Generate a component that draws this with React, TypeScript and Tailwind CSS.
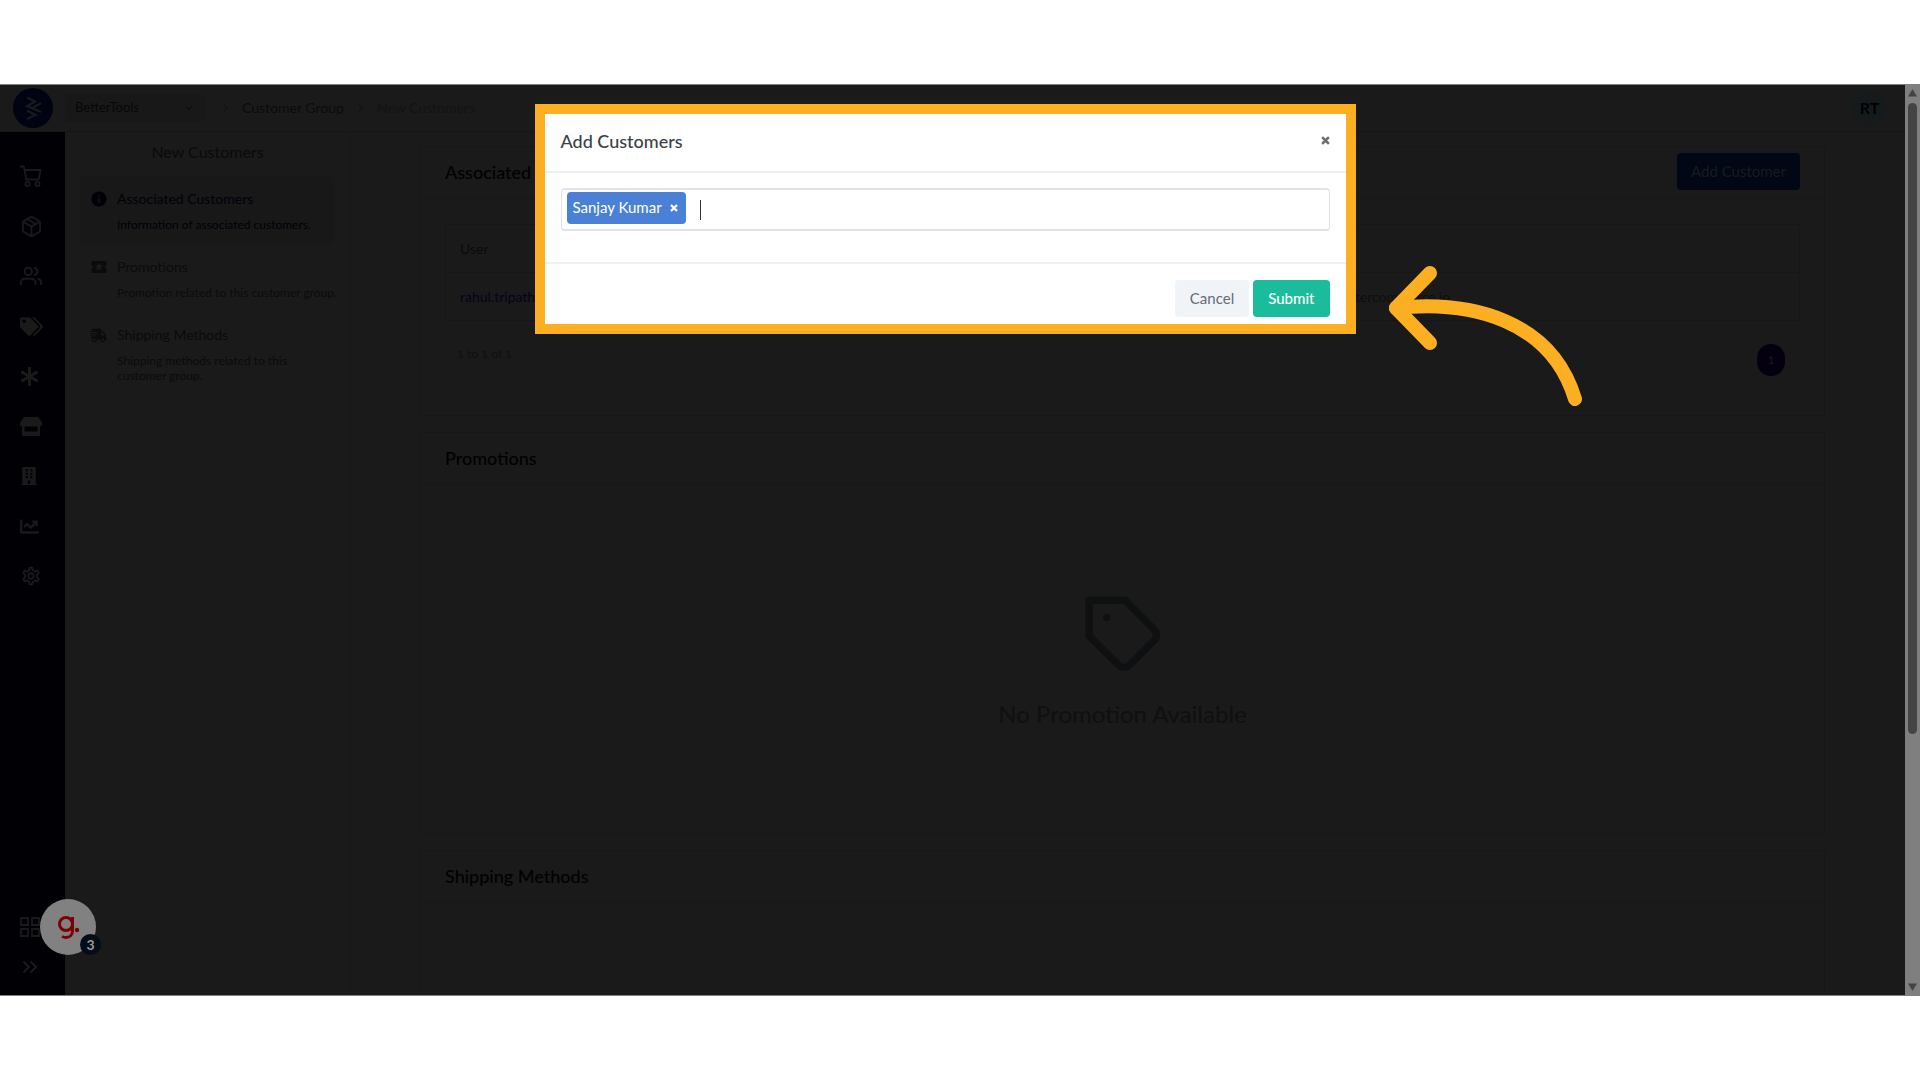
import type { ReactNode } from "react";
import { FaAsterisk, FaBuilding, FaChartLine, FaShippingFast, FaTags } from "react-icons/fa";
import {
  FiChevronDown,
  FiChevronRight,
  FiChevronsRight,
  FiPackage,
  FiUsers,
} from "react-icons/fi";
import { MdInfo, MdLocalActivity, MdOutlineSettings } from "react-icons/md";

function CartIcon() {
  return (
    <svg width="22" height="22" viewBox="0 0 22 22" fill="none" stroke="currentColor" strokeWidth="1.800">
      <path d="M0 1.500h3.800l2.500 13h12.400l1.800-9.500H4.500" strokeLinejoin="round" />
      <circle cx="7.500" cy="19" r="2.100" />
      <circle cx="17.500" cy="19" r="2.100" />
    </svg>
  );
}

function StoreIcon() {
  return (
    <svg width="22" height="19" viewBox="0 0 22 19" fill="currentColor">
      <path d="M4 0h14l4 5.500v1.500a2.500 2.500 0 0 1-2.500 2.500h-17A2.500 2.500 0 0 1 0 7V5.500z" />
      <path d="M2 9h2.500v5.500h13V9H20v9a1 1 0 0 1-1 1H3a1 1 0 0 1-1-1z" />
    </svg>
  );
}

function GridIcon() {
  return (
    <svg width="20" height="20" viewBox="0 0 20 20" fill="none" stroke="currentColor" strokeWidth="1.800">
      <path d="M1 1h7v7H1zM12 1h7v7h-7zM1 12h7v7H1zM12 12h7v7h-7z" />
    </svg>
  );
}

const navItems = [
  { label: "Orders", icon: <CartIcon /> },
  { label: "Catalog", icon: <FiPackage size={23} /> },
  { label: "Customers", icon: <FiUsers size={22} /> },
  { label: "Marketing", icon: <FaTags size={23} /> },
  { label: "Content", icon: <FaAsterisk size={19} /> },
  { label: "Store", icon: <StoreIcon /> },
  { label: "Company", icon: <FaBuilding size={18} /> },
  { label: "Reports", icon: <FaChartLine size={19} /> },
  { label: "Settings", icon: <MdOutlineSettings size={22} /> },
];

const sections = [
  {
    title: "Associated Customers",
    text: "Information of associated customers.",
    icon: <MdInfo size={18} />,
    active: true,
  },
  {
    title: "Promotions",
    text: "Promotion related to this customer group.",
    icon: <MdLocalActivity size={18} />,
    active: false,
  },
  {
    title: "Shipping Methods",
    text: "Shipping methods related to this customer group.",
    icon: <FaShippingFast size={17} />,
    active: false,
  },
];

function Header() {
  return (
    <header className="flex h-[47px] shrink-0 items-center border-b border-[#161616] pl-[13px] pr-[18px]">
      <a href="#" aria-label="Home" className="mr-3">
        <svg width="40" height="40" viewBox="0 0 40 40" fill="none">
          <circle cx="20" cy="20" r="20" fill="#010312" />
          <path
            d="M14 9.500l8 4-8 4.500 14 6M28 15l-8 4.500M14 22.500l8.500 4.500-8.500 4"
            stroke="#1a1a1c"
            strokeWidth="2.200"
          />
        </svg>
      </a>
      <div className="relative w-[140px]">
        <select
          aria-label="Store"
          className="h-7 w-full appearance-none rounded-sm bg-[#181818] px-2.5 text-[13px] text-[#060708]"
        >
          <option>BetterTools</option>
        </select>
        <FiChevronDown
          size={12}
          className="pointer-events-none absolute right-2.5 top-2 text-[#060708]"
        />
      </div>
      <nav className="ml-[14px] flex items-center gap-2.5 text-sm">
        <FiChevronRight size={13} className="text-[#141414]" />
        <a href="#" className="text-[#0a0b0d]">
          Customer Group
        </a>
        <FiChevronRight size={13} className="text-[#141414]" />
        <span className="text-[#121314]">New Customers</span>
      </nav>
      <button className="ml-auto size-[35px] rounded-full bg-[#151a1c] text-base font-bold text-[#020202]">
        RT
      </button>
    </header>
  );
}

function Rail() {
  return (
    <nav className="flex w-[65px] shrink-0 flex-col bg-[#000005] pb-2 pt-[19px] text-[#1a1a1a]">
      {navItems.map((item) => (
        <a
          key={item.label}
          href="#"
          aria-label={item.label}
          className="flex h-[50px] items-center pl-5"
        >
          {item.icon}
        </a>
      ))}
      <a href="#" aria-label="Apps" className="mt-auto flex h-10 items-center pl-5">
        <GridIcon />
      </a>
      <button aria-label="Expand menu" className="flex h-10 items-center pl-[18px]">
        <FiChevronsRight size={24} />
      </button>
    </nav>
  );
}

function SectionList() {
  return (
    <aside className="w-[286px] shrink-0 border-r border-[#171717] px-[15px] pt-1.5">
      <h1 className="mb-[11px] text-center text-base leading-[27px] text-[#090a0b]">
        New Customers
      </h1>
      {sections.map((item) => (
        <a
          key={item.title}
          href="#"
          className={
            item.active
              ? "flex gap-[9px] rounded-md bg-[#181818] pb-3 pl-2.5 pt-[11px] text-[#000008]"
              : "flex gap-[9px] rounded-md pb-3 pl-2.5 pt-[11px] text-[#0a0b0d]"
          }
        >
          <span className="flex h-6 w-[18px] shrink-0 items-center">{item.icon}</span>
          <span className="-mr-1">
            <span className="block text-sm leading-6">{item.title}</span>
            <span className="mt-1.5 block text-xs leading-[15px]">{item.text}</span>
          </span>
        </a>
      ))}
    </aside>
  );
}

interface CardProps {
  title: string;
  action?: ReactNode;
  className?: string;
  children?: ReactNode;
}

function Card({ title, action, className = "", children }: CardProps) {
  return (
    <section className={`flex flex-col border border-[#171717] ${className}`}>
      <div className="flex h-[52px] shrink-0 items-center justify-between border-b border-[#171717] px-6 pb-0.5">
        <h2 className="text-lg font-medium text-[#010101]">{title}</h2>
        {action}
      </div>
      {children}
    </section>
  );
}

function Content() {
  return (
    <main className="flex min-w-0 flex-1 flex-col gap-4 overflow-hidden pl-[69px] pr-20 pt-[14px]">
      <Card
        title="Associated Customers"
        className="h-[270px] shrink-0"
        action={
          <button className="h-[37px] shrink-0 rounded-sm bg-[#010714] px-3.5 text-[15px] text-[#1a1b1e]">
            Add Customer
          </button>
        }
      >
        <div className="px-6 pt-[25px]">
          <table className="w-full table-fixed border border-[#171717] text-left text-sm">
            <thead>
              <tr className="h-12 border-b border-[#171717] text-[#0a0a0b]">
                <th className="w-[58%] px-3.5 font-normal">User</th>
                <th className="px-3.5 font-normal">Email</th>
              </tr>
            </thead>
            <tbody>
              <tr className="h-12">
                <td className="px-3.5">
                  <a href="#" className="text-[#060318]">
                    rahul.tripathi
                  </a>
                </td>
                <td className="px-3.5 text-[#0e0e0f]">rahul.tripathi@bettercommerce.io</td>
              </tr>
            </tbody>
          </table>
        </div>
        <div className="flex justify-between pl-9 pr-[39px] pt-[23px]">
          <p className="text-xs leading-5 text-[#0e0f10]">1 to 1 of 1</p>
          <button className="h-8 w-7 rounded-full bg-[#05000f] text-xs text-[#1a1720]">1</button>
        </div>
      </Card>
      <Card title="Promotions" className="h-[402px] shrink-0">
        <div className="flex flex-1 flex-col items-center justify-center gap-[26px] pt-2">
          <svg width="76" height="76" viewBox="0 0 74 74" fill="none">
            <path
              d="M4 4h35l28.500 29a7 7 0 0 1 0 10L43 67.500a7 7 0 0 1-10 0L4 39z"
              stroke="#0e1011"
              strokeWidth="7"
              strokeLinejoin="round"
            />
            <circle cx="21" cy="21" r="3.500" fill="#0e1011" />
          </svg>
          <p className="text-2xl text-[#0e1011]">No Promotion Available</p>
        </div>
      </Card>
      <Card title="Shipping Methods" className="flex-1 border-b-0" />
    </main>
  );
}

function Scrollbar() {
  return (
    <div
      aria-hidden="true"
      className="flex w-[15px] shrink-0 flex-col items-center bg-[#7f7f7f] pb-1 pt-1"
    >
      <svg width="9" height="8" viewBox="0 0 9 8" fill="#444">
        <path d="M4.500 0L9 7.500H0z" />
      </svg>
      <div className="mb-auto mt-1.5 h-[70%] w-[9px] rounded-full bg-[#444]" />
      <svg width="9" height="8" viewBox="0 0 9 8" fill="#444">
        <path d="M4.500 8L9 .500H0z" />
      </svg>
    </div>
  );
}

function Cross({ size }: { size: number }) {
  return (
    <svg width={size} height={size} viewBox="0 0 8 8" fill="none">
      <path d="M1 1l6 6M7 1L1 7" stroke="currentColor" strokeWidth="2.200" />
    </svg>
  );
}

function AddCustomersModal() {
  return (
    <div className="relative w-[821px] border-10 border-[#fdaf22] bg-white">
      <div className="flex h-[59px] items-center justify-between border-b-2 border-[#eff0f2] px-4 pb-1">
        <h2 className="text-lg font-medium text-[#3b3f46]">Add Customers</h2>
        <button aria-label="Close" className="text-[#6c6c6c]">
          <Cross size={9} />
        </button>
      </div>
      <div className="px-4 pb-[31px] pt-[15px]">
        <div className="flex h-[43px] items-center rounded-sm border-2 border-x border-[#dfe4ea] px-[5px]">
          <span className="mb-1 flex h-8 items-center gap-2 rounded-sm bg-[#4a81d6] pl-1.5 pr-2 text-[15px] text-white">
            Sanjay Kumar
            <button aria-label="Remove Sanjay Kumar">
              <Cross size={8} />
            </button>
          </span>
          <span className="ml-3.5 h-5 w-px bg-[#333]" />
          <input aria-label="Customers" className="min-w-0 flex-1 outline-none" />
        </div>
      </div>
      <div className="flex justify-end gap-1 border-t-2 border-[#eff0f2] px-4 pb-[7px] pt-4 text-[15px]">
        <button className="h-[37px] rounded-sm bg-[#f0f4f8] px-[15px] text-[#666b73]">
          Cancel
        </button>
        <button className="h-[37px] rounded-sm bg-[#1bbc9b] px-[15px] font-medium text-white">
          Submit
        </button>
      </div>
      <svg
        aria-hidden="true"
        className="absolute left-full top-[150px] ml-[41px]"
        width="196"
        height="146"
        viewBox="0 0 196 146"
        fill="none"
        stroke="#fdaf22"
        strokeWidth="14"
        strokeLinecap="round"
        strokeLinejoin="round"
      >
        <path d="M43 9L9 44l34 35" />
        <path d="M9 44C84 36 164 56 188 135" />
      </svg>
    </div>
  );
}

function GuideLauncher() {
  return (
    <button
      aria-label="Open guide"
      className="absolute bottom-10 left-10 size-14 rounded-full bg-[#818181]"
    >
      <svg className="absolute left-[18px] top-[16px]" width="22" height="25" viewBox="0 0 22 25" fill="none">
        <circle cx="8" cy="9" r="6.500" stroke="#7c0006" strokeWidth="3" />
        <path d="M14.500 2v14c0 4-3 6.500-6.500 6.500-1.500 0-3-.500-4-1" stroke="#7c0006" strokeWidth="3" />
        <circle cx="19" cy="15" r="2.200" fill="#7c0006" />
      </svg>
      <span className="absolute -right-[5px] bottom-0 flex size-[21px] items-center justify-center rounded-full bg-[#050d18] text-sm font-bold text-[#999]">
        3
      </span>
    </button>
  );
}

export default function App() {
  return (
    <div className="flex h-screen flex-col bg-white py-[84px] font-[Lato,sans-serif]">
      <div className="relative flex min-h-0 flex-1 overflow-hidden border-y border-[#7f7f7f] bg-[#1a1a1a]">
        <div className="flex min-w-0 flex-1 flex-col">
          <Header />
          <div className="flex min-h-0 flex-1">
            <Rail />
            <SectionList />
            <Content />
          </div>
        </div>
        <Scrollbar />
        <GuideLauncher />
        <div className="pointer-events-none absolute inset-0 flex items-start justify-center pr-[30px] pt-[19px]">
          <AddCustomersModal />
        </div>
      </div>
    </div>
  );
}
